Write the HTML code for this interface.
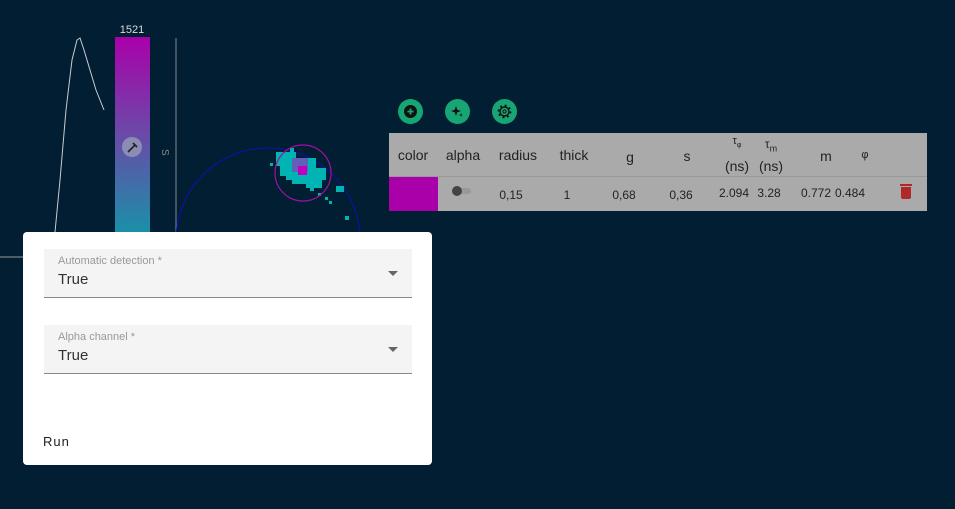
<!DOCTYPE html>
<html><head><meta charset="utf-8"><style>
body{margin:0;width:955px;height:509px;background:#021e33;overflow:hidden;position:relative;font-family:"Liberation Sans",sans-serif}
.a{position:absolute}
.t{position:absolute;left:389px;top:133px;width:538px;height:78px;background:#aaaaaa;color:#222;font-size:14px}
.t div{position:absolute;transform:translateX(-50%);white-space:nowrap}
.btn{position:absolute;top:99px;width:25px;height:25px;border-radius:50%;background:#17a673}
</style></head><body>
<svg class="a" style="left:0;top:0" width="955" height="509">
<polyline points="55,232 60,180 66,110 72,60 77,40 80,38 84,50 90,70 96,90 104,110" fill="none" stroke="#ccc" stroke-width="1"/>
<line x1="0" y1="257" x2="23" y2="257" stroke="#999"/>
<defs><linearGradient id="g" x1="0" y1="0" x2="0" y2="1"><stop offset="0" stop-color="#aa00aa"/><stop offset="0.5" stop-color="#6a4aa8"/><stop offset="1" stop-color="#1a90a8"/></linearGradient></defs>
<rect x="115" y="37" width="35" height="195" fill="url(#g)"/>
<circle cx="132" cy="147" r="10" fill="#8c8cb4"/>
<path d="M128 152 L135 145 M133 143 L137 147" stroke="#222" stroke-width="1.6"/>
<text x="132" y="33" font-size="11" fill="#ddd" text-anchor="middle">1521</text>
<line x1="176" y1="38" x2="176" y2="232" stroke="#888"/>
<text x="162" y="149" font-size="10" fill="#888" transform="rotate(90 162 149)">S</text>
<circle cx="268" cy="240" r="92" fill="none" stroke="#1010a0" stroke-width="1.2"/>
<g fill="#00b4b4">
<rect x="276" y="152" width="20" height="14"/><rect x="280" y="158" width="36" height="18"/><rect x="286" y="168" width="40" height="12"/><rect x="292" y="176" width="30" height="8"/><rect x="306" y="182" width="16" height="6"/>
<rect x="290" y="148" width="4" height="4"/><rect x="270" y="163" width="3" height="3"/><rect x="336" y="186" width="8" height="6"/><rect x="325" y="197" width="3" height="3"/><rect x="329" y="201" width="3" height="3"/><rect x="345" y="216" width="4" height="4"/><rect x="318" y="193" width="3" height="3"/><rect x="310" y="187" width="4" height="4"/>
</g>
<rect x="292" y="158" width="16" height="14" fill="#6060b8"/>
<rect x="298" y="166" width="9" height="9" fill="#c000c0"/>
<circle cx="303" cy="173" r="28" fill="none" stroke="#a010a0" stroke-width="1.2"/>
</svg>
<div class="btn" style="left:398px"><svg width="25" height="25"><circle cx="12.5" cy="12.5" r="6.5" fill="#111"/><path d="M9.5 12.5h6M12.5 9.5v6" stroke="#17a673" stroke-width="1.8"/></svg></div>
<div class="btn" style="left:445px"><svg width="25" height="25"><path d="M11 7l1.3 3.7L16 12l-3.7 1.3L11 17l-1.3-3.7L6 12l3.7-1.3z" fill="#111"/><path d="M16 14l.5 1.5 1.5.5-1.5.5-.5 1.5-.5-1.5-1.5-.5 1.5-.5z" fill="#111"/></svg></div>
<div class="btn" style="left:492px"><svg width="25" height="25"><circle cx="12.5" cy="12.5" r="4.5" fill="none" stroke="#111" stroke-width="1.4"/><circle cx="12.5" cy="12.5" r="6" fill="none" stroke="#111" stroke-width="1.8" stroke-dasharray="2 2.7"/><circle cx="12.5" cy="12.5" r="1.6" fill="none" stroke="#111"/></svg></div>
<div class="t">
<div style="left:24px;top:14px">color</div><div style="left:74px;top:14px">alpha</div><div style="left:129px;top:14px">radius</div><div style="left:185px;top:14px">thick</div><div style="left:241px;top:16px">g</div><div style="left:298px;top:15px">s</div>
<div style="left:348px;top:2px;font-size:11px">τ<sub style="font-size:7px">φ</sub></div><div style="left:348px;top:25px">(ns)</div>
<div style="left:382px;top:4px;font-size:12px">τ<sub style="font-size:9px">m</sub></div><div style="left:382px;top:25px">(ns)</div>
<div style="left:437px;top:15px">m</div><div style="left:476px;top:16px;font-size:11px">φ</div>
<div style="left:0;top:43px;width:538px;height:1px;background:#999;transform:none"></div>
<div style="left:0;top:44px;width:49px;height:34px;background:#aa00aa;transform:none"></div>
<div style="left:74px;top:55px;width:16px;height:6px;background:#999;border-radius:3px"></div>
<div style="left:68px;top:53px;width:10px;height:10px;background:#444;border-radius:50%"></div>
<div style="font-size:12px;left:122px;top:55px">0,15</div><div style="font-size:12px;left:178px;top:55px">1</div><div style="font-size:12px;left:235px;top:55px">0,68</div><div style="font-size:12px;left:292px;top:55px">0,36</div><div style="font-size:12px;left:345px;top:53px">2.094</div><div style="font-size:12px;left:380px;top:53px">3.28</div><div style="font-size:12px;left:427px;top:53px">0.772</div><div style="font-size:12px;left:461px;top:53px">0.484</div>
<div style="left:517px;top:51px;width:12px;height:2px;background:#b02828"></div>
<div style="left:517px;top:54px;width:10px;height:12px;background:#b02828;border-radius:0 0 2px 2px"></div>
</div>
<div class="a" style="left:23px;top:232px;width:409px;height:233px;background:#fff;border-radius:4px">
<div class="a" style="left:21px;top:17px;width:368px;height:48px;background:#f4f4f4;border-bottom:1px solid #888">
<div class="a" style="left:14px;top:6px;font-size:11px;color:#999">Automatic detection *</div>
<div class="a" style="left:14px;top:22px;font-size:15px;color:#333">True</div>
<div class="a" style="left:344px;top:22px;border:5px solid transparent;border-top-color:#666;border-bottom:0"></div></div>
<div class="a" style="left:21px;top:93px;width:368px;height:48px;background:#f4f4f4;border-bottom:1px solid #888">
<div class="a" style="left:14px;top:6px;font-size:11px;color:#999">Alpha channel *</div>
<div class="a" style="left:14px;top:22px;font-size:15px;color:#333">True</div>
<div class="a" style="left:344px;top:22px;border:5px solid transparent;border-top-color:#666;border-bottom:0"></div></div>
<div class="a" style="left:20px;top:202px;font-size:13px;color:#222;letter-spacing:1px">Run</div>
</div>
</body></html>
